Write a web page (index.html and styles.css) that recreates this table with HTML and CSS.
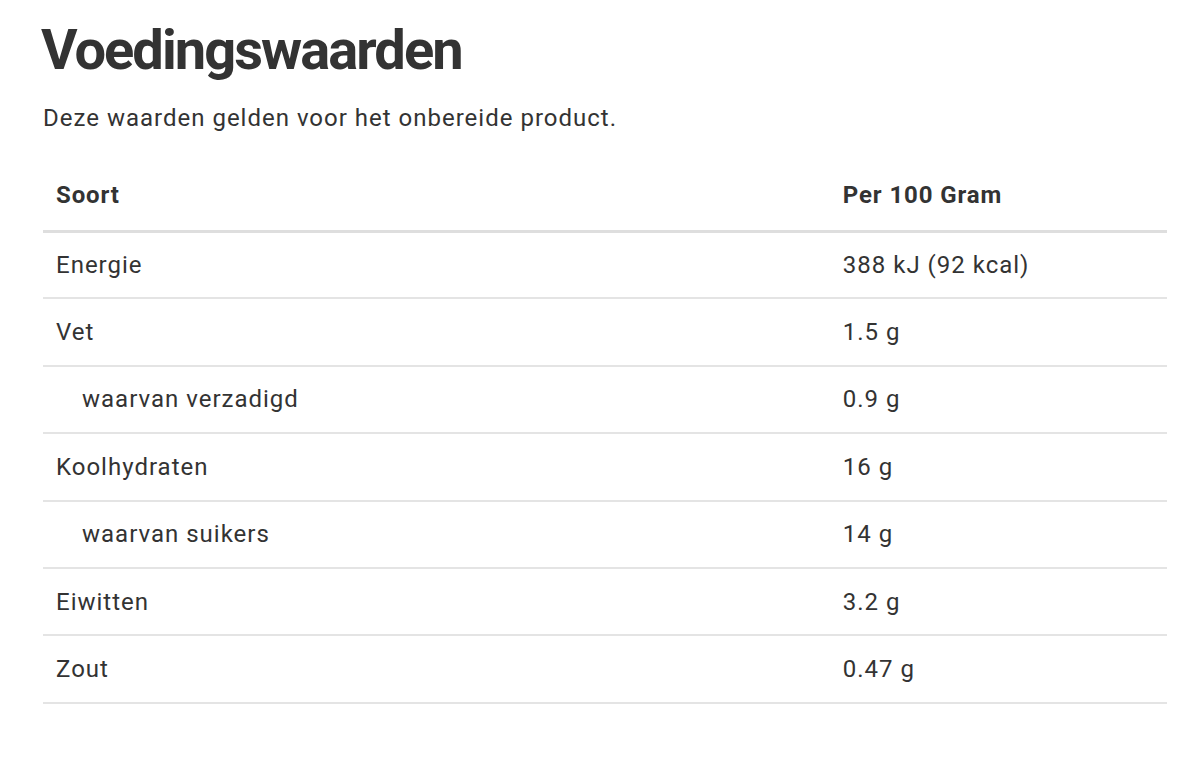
FILE: index.html
```html
<!DOCTYPE html>
<html lang="nl">
<head>
<meta charset="utf-8">
<title>Voedingswaarden</title>
<link rel="stylesheet" href="styles.css">
</head>
<body>
<main class="page">
  <h1 class="title">Voedingswaarden</h1>
  <p class="intro">Deze waarden gelden voor het onbereide product.</p>
  <table class="nutrition">
    <thead>
      <tr><th class="col-name">Soort</th><th class="col-value">Per 100 Gram</th></tr>
    </thead>
    <tbody>
      <tr><td>Energie</td><td>388 kJ (92 kcal)</td></tr>
      <tr><td>Vet</td><td>1.5 g</td></tr>
      <tr><td class="sub">waarvan verzadigd</td><td>0.9 g</td></tr>
      <tr><td>Koolhydraten</td><td>16 g</td></tr>
      <tr><td class="sub">waarvan suikers</td><td>14 g</td></tr>
      <tr><td>Eiwitten</td><td>3.2 g</td></tr>
      <tr><td>Zout</td><td>0.47 g</td></tr>
    </tbody>
  </table>
</main>
</body>
</html>
```

FILE: styles.css
```css
* { box-sizing: border-box; }
html, body { margin: 0; padding: 0; background: #fff; }
body {
  font-family: Roboto, "Liberation Sans", sans-serif;
  color: #333;
}
.page {
  padding: 18px 33px 0 43px;
}
.title {
  margin: 0 0 0 -2px;
  font-size: 56px;
  line-height: 64px;
  font-weight: 700;
  letter-spacing: -1.95px;
  color: #333;
}
.intro {
  margin: 20px 0 0 0;
  font-size: 24px;
  line-height: 32px;
  letter-spacing: 1px;
}
.nutrition {
  width: 100%;
  margin-top: 33px;
  border-collapse: collapse;
  font-size: 24px;
  letter-spacing: 1px;
}
.nutrition th,
.nutrition td {
  text-align: left;
  padding: 0 13px;
  height: 67.4px;
  vertical-align: middle;
  border-bottom: 2px solid #e4e4e4;
  font-weight: 400;
}
.nutrition th {
  font-weight: 700;
  letter-spacing: 0.9px;
  border-bottom: 3px solid #dedede;
  height: 64px;
  vertical-align: top;
  padding-top: 14px;
}
.col-name { width: 70%; }
.nutrition td.sub { padding-left: 39px; }
```
